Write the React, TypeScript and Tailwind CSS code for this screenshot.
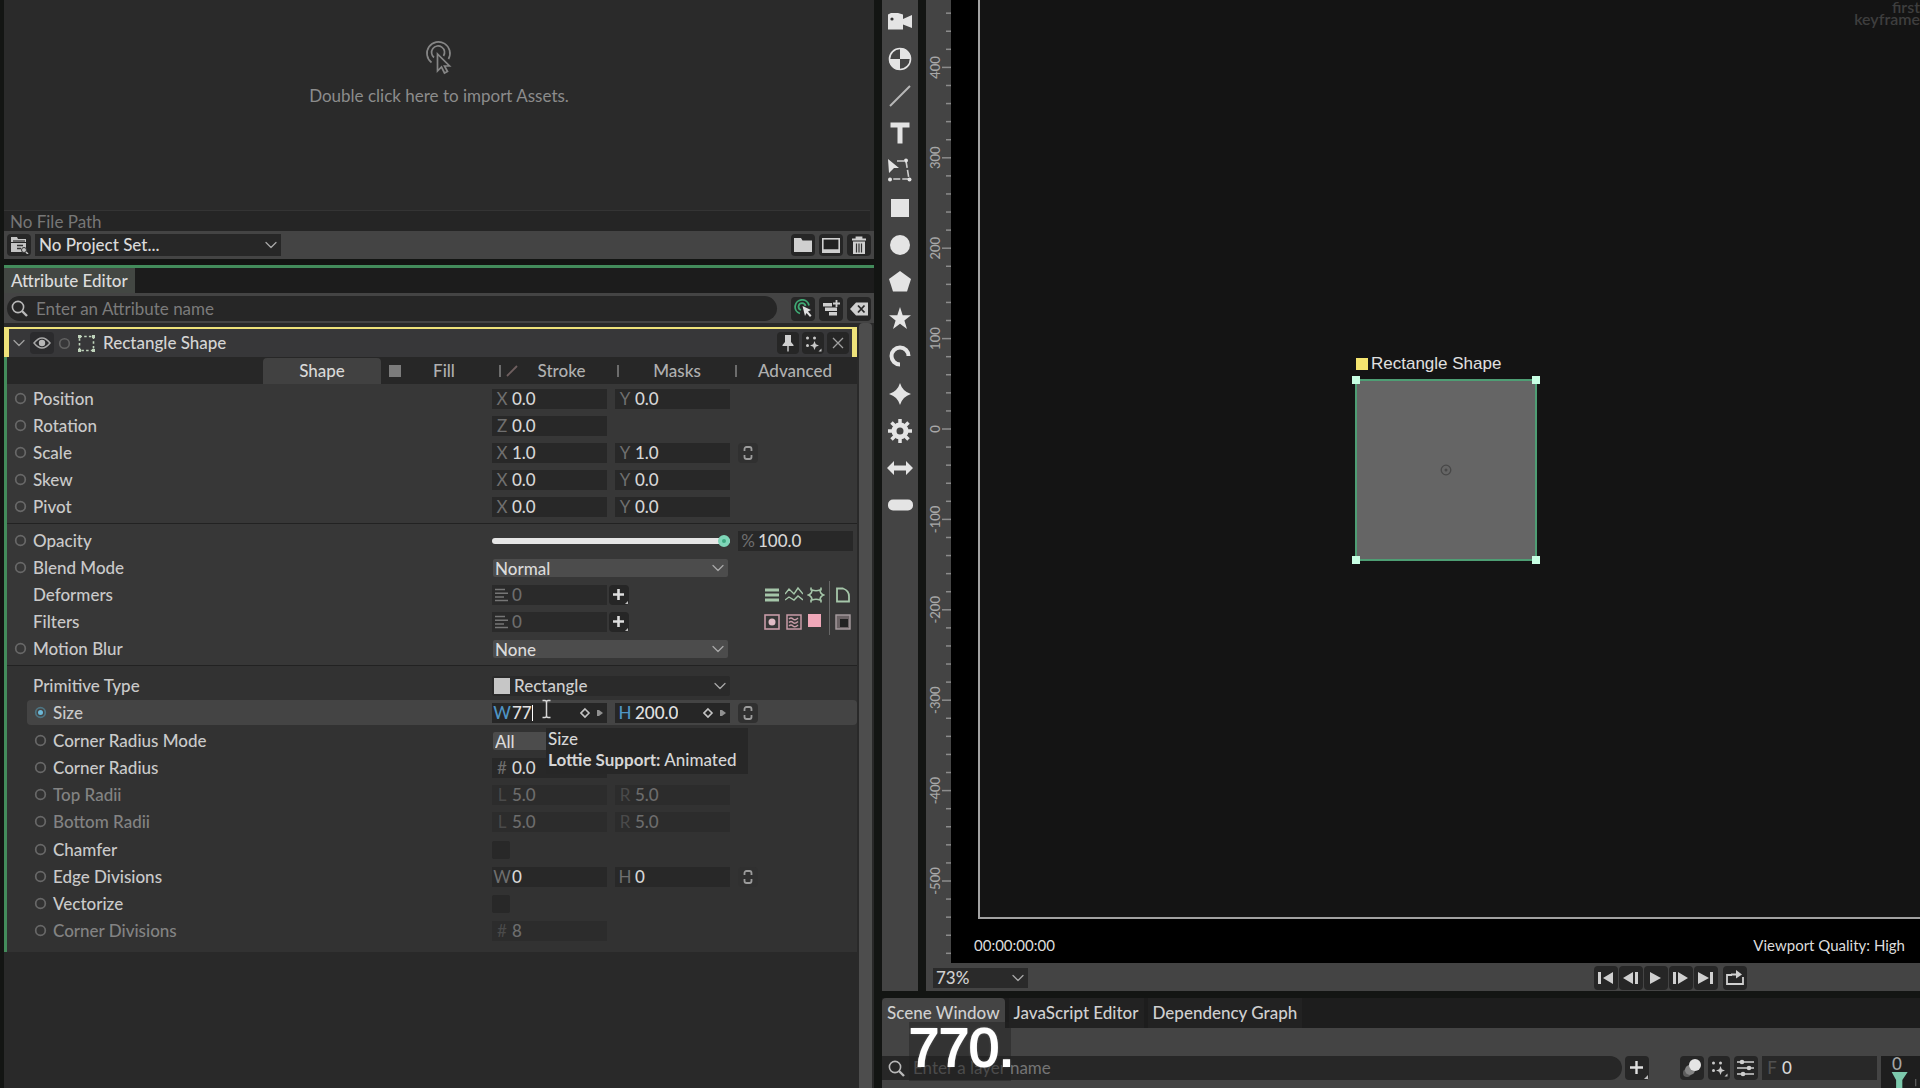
import { useState, type ReactNode } from "react";
import { ChevronDown } from "lucide-react";

const RULER_STEP = 90.4;
const RULER_ZERO = 429;

function IconButton({
  label,
  className = "",
  children,
}: {
  label: string;
  className?: string;
  children: ReactNode;
}) {
  return (
    <button
      aria-label={label}
      className={`flex items-center justify-center rounded-sm bg-[#262626] text-[#cfcfcf] ${className}`}
    >
      {children}
    </button>
  );
}

function SearchIcon() {
  return (
    <svg width="17" height="17" viewBox="0 0 17 17" className="shrink-0">
      <circle cx="7" cy="7" r="5.6" fill="none" stroke="#b9b9b9" strokeWidth="1.6" />
      <path d="M11 11l5 5" stroke="#b9b9b9" strokeWidth="2.4" />
    </svg>
  );
}

function SparkDots() {
  return (
    <svg width="17" height="17" viewBox="0 0 17 17" fill="#c9c9c9">
      <circle cx="2.5" cy="3" r="1.5" />
      <circle cx="9.5" cy="3" r="1.5" />
      <circle cx="2.5" cy="10.5" r="1.5" />
      <path d="M9.500 6l1.300 3.200 3.200 1.300-3.200 1.300L9.500 15l-1.300-3.200L5 10.500l3.200-1.300z" />
      <path d="M16.500 13.500v3h-3z" />
    </svg>
  );
}

function LinkIcon() {
  return (
    <button
      aria-label="Link values"
      className="flex h-5 w-5 items-center justify-center rounded-sm bg-[#303030]"
    >
      <svg width="10" height="16" viewBox="0 0 10 16" fill="none" stroke="#9c9c9c" strokeWidth="1.8">
        <path d="M1.500 6V4a2 2 0 0 1 2-2h3a2 2 0 0 1 2 2v2M1.500 10v2a2 2 0 0 0 2 2h3a2 2 0 0 0 2-2v-2" />
      </svg>
    </button>
  );
}

function NumberField({
  id,
  prefix,
  value,
  disabled = false,
}: {
  id: string;
  prefix: string;
  value: string;
  disabled?: boolean;
}) {
  const [text, setText] = useState(value);
  return (
    <div
      className={`flex h-5 w-[115px] items-center ${disabled ? "bg-[#2c2c2c] text-[#6d6d6d]" : "bg-[#282828] text-[#d6d6d6]"}`}
    >
      <label
        htmlFor={id}
        className={`w-5 shrink-0 text-center font-normal ${disabled ? "text-[#4a4a4a]" : "text-[#6f6f6f]"}`}
      >
        {prefix}
      </label>
      <input
        id={id}
        value={text}
        disabled={disabled}
        onChange={(e) => setText(e.target.value)}
        className="w-full min-w-0 bg-transparent outline-none"
      />
    </div>
  );
}

function KeyedField({
  id,
  prefix,
  value,
  editing = false,
}: {
  id: string;
  prefix: string;
  value: string;
  editing?: boolean;
}) {
  const [text, setText] = useState(value);
  return (
    <div className="flex h-5 w-[115px] items-center bg-[#262626] text-[#e2e2e2]">
      <label htmlFor={id} className="w-5 shrink-0 text-center text-[#4f94c4]">
        {prefix}
      </label>
      <input
        id={id}
        value={text}
        onChange={(e) => setText(e.target.value)}
        className="field-sizing-content bg-transparent outline-none"
      />
      {editing && <span className="h-4 w-px bg-white" />}
      <svg width="24" height="12" viewBox="0 0 24 12" className="mr-[3px] ml-auto shrink-0">
        <path d="M5 2l4 4-4 4-4-4z" fill="none" stroke="#c4c4c4" strokeWidth="1.600" />
        <path d="M17 3h2l4 3-4 3h-2z" fill="#909090" />
      </svg>
    </div>
  );
}

function SelectField({
  id,
  value,
  className,
  children,
}: {
  id: string;
  value: string;
  className: string;
  children?: ReactNode;
}) {
  return (
    <div className={`flex items-center rounded-xs ${className}`}>
      {children}
      <select id={id} className="h-full w-full appearance-none bg-transparent pl-[2px] outline-none">
        <option>{value}</option>
      </select>
      <ChevronDown size={20} className="-ml-5 shrink-0 text-[#a8a8a8]" strokeWidth={1.5} />
    </div>
  );
}

function Row({
  id,
  label,
  dot = true,
  sub = false,
  dim = false,
  active = false,
  children,
}: {
  id: string;
  label: string;
  dot?: boolean;
  sub?: boolean;
  dim?: boolean;
  active?: boolean;
  children: ReactNode;
}) {
  return (
    <div className={`flex h-[27px] items-center py-px ${sub ? "pl-5" : ""}`}>
      <div className={`flex h-full grow items-center rounded-sm ${active ? "bg-[#444444]" : ""}`}>
        <div className="flex w-[26px] justify-center">
          {dot && (
            <svg width="13" height="13" viewBox="0 0 13 13">
              <circle
                cx="6.5"
                cy="6.5"
                r="4.800"
                fill="none"
                stroke={active ? "#4d7482" : "#686868"}
                strokeWidth="1.700"
              />
              {active && <circle cx="6.500" cy="6.500" r="2.500" fill="#6db9d8" />}
            </svg>
          )}
        </div>
        <label htmlFor={id} className={`grow ${dim ? "text-[#838383]" : "text-[#cacaca]"}`}>
          {label}
        </label>
        <div className="flex w-[365px] items-center gap-2">{children}</div>
      </div>
    </div>
  );
}

function StackField({ id }: { id: string }) {
  return (
    <>
      <div className="flex h-5 w-[115px] items-center bg-[#2a2a2a] text-[#6d6d6d]">
        <svg width="20" height="14" viewBox="0 0 20 14" stroke="#767676" strokeWidth="1.500" className="shrink-0">
          <path d="M3 1.500h10M3 5.200h13M3 8.900h9M3 12.500h13" />
        </svg>
        <input id={id} readOnly value="0" className="w-full min-w-0 bg-transparent outline-none" />
      </div>
      <IconButton label="Add" className="-ml-[6px] h-5 w-5">
        <svg width="20" height="20" viewBox="0 0 20 20">
          <path d="M9.500 4v11M4 9.500h11" stroke="#dedede" strokeWidth="2.600" />
          <path d="M19 16v3h-3z" fill="#bdbdbd" />
        </svg>
      </IconButton>
    </>
  );
}

function DeformerIcons() {
  return (
    <div className="mr-[5px] ml-auto flex h-[27px] items-center gap-1 text-[#a5c6a9]">
      <button aria-label="Bars">
        <svg width="18" height="18" viewBox="0 0 18 18" stroke="currentColor" strokeWidth="3">
          <path d="M2 4h14M2 9h14M2 14h14" />
        </svg>
      </button>
      <button aria-label="Wave">
        <svg width="18" height="18" viewBox="0 0 18 18" fill="none" stroke="currentColor" strokeWidth="1.400">
          <path d="M0 8l4-5 5 5 4-6 5 6M0 14l4-3 5 3 4-4 5 4" />
        </svg>
      </button>
      <button aria-label="Bulge">
        <svg width="18" height="18" viewBox="0 0 18 18" fill="none" stroke="currentColor" strokeWidth="1.600">
          <path d="M5 4q4 1.500 8 0q0 3.500 3.500 5q-3.500 1.500-3.500 5q-4-1.500-8 0q0-3.500-3.500-5q3.500-1.500 3.500-5z" />
          <path d="M4 1.500v3M14 1.500v3M4 13.500v3M14 13.500v3" />
        </svg>
      </button>
      <span className="h-full w-px bg-[#666666]" />
      <button aria-label="Path">
        <svg width="18" height="18" viewBox="0 0 18 18" fill="none" stroke="currentColor" strokeWidth="1.800">
          <path d="M3 2.500h6q6 2 6 8v5H3z" />
        </svg>
      </button>
    </div>
  );
}

function FilterIcons() {
  return (
    <div className="mr-[5px] ml-auto flex h-[27px] items-center gap-1 text-[#c79ba7]">
      <button aria-label="Glow">
        <svg width="18" height="18" viewBox="0 0 18 18">
          <rect x="2" y="2" width="14" height="14" fill="none" stroke="currentColor" strokeWidth="1.600" />
          <circle cx="9" cy="9" r="3.500" fill="#e0bcc5" />
        </svg>
      </button>
      <button aria-label="Distort">
        <svg width="18" height="18" viewBox="0 0 18 18" fill="none" stroke="currentColor" strokeWidth="1.500">
          <rect x="2" y="2" width="14" height="14" />
          <path d="M4 6q2-2 4 0t5-1M4 9.500q2-2 4 0t5-1M4 13q2-2 4 0t5-1" />
        </svg>
      </button>
      <button aria-label="Colour">
        <svg width="18" height="18" viewBox="0 0 18 18">
          <rect x="1" y="1" width="13" height="13" fill="#f0a8b9" />
        </svg>
      </button>
      <span className="h-full w-px bg-[#666666]" />
      <button aria-label="Matte">
        <svg width="18" height="18" viewBox="0 0 18 18">
          <rect x="2" y="2" width="14" height="14" fill="#6a6264" stroke="#a89da0" strokeWidth="1.400" />
          <rect x="6" y="6" width="8" height="8" fill="#222222" />
        </svg>
      </button>
    </div>
  );
}

function CheckField({ id }: { id: string }) {
  return <input id={id} type="checkbox" className="h-[18px] w-[18px] appearance-none rounded-xs bg-[#282828]" />;
}

function AssetsPanel() {
  return (
    <section className="bg-[#2a2a2a]">
      <div className="flex h-[210px] flex-col items-center pt-10 text-[#8c8c8c]">
        <svg width="32" height="36" viewBox="0 0 32 36" fill="none" stroke="#868686" strokeWidth="1.700">
          <path d="M8.500 22.500A11.500 11.500 0 1 1 25.500 19M11 17.500A6.500 6.500 0 1 1 20.500 16" />
          <path d="M14.500 14v17l4-4 3 6 3-1.500-3-5.500h5z" fill="#2a2a2a" />
        </svg>
        <p className="mt-1 leading-8 font-normal">Double click here to import Assets.</p>
      </div>
      <div className="mr-1 h-[21px] border-t border-[#343434] bg-[#252525] pl-[6px] leading-[22px] font-normal text-[#777777]">
        No File Path
      </div>
      <div className="flex h-7 items-center gap-1 bg-[#444444] pr-[3px] pl-[3px]">
        <IconButton label="Open project" className="h-[22px] w-6">
          <svg width="20" height="18" viewBox="0 0 20 18">
            <path d="M2 1h6l1 2h8v3H2z M2 7h15v9H2z" fill="#c4c4c4" />
            <path d="M4 5h12" stroke="#333333" strokeWidth="1.200" />
            <path d="M8 9.500h6M8 12.500h4" stroke="#333333" strokeWidth="1.500" />
            <circle cx="15" cy="14" r="2.500" fill="#c4c4c4" stroke="#333333" />
            <path d="M17 16l2 2" stroke="#c4c4c4" strokeWidth="1.500" />
          </svg>
        </IconButton>
        <div className="flex h-[22px] w-[246px] items-center bg-[#272727]">
          <select aria-label="Project" className="w-full appearance-none bg-transparent pl-1 text-[#dadada] outline-none">
            <option>No Project Set...</option>
          </select>
          <ChevronDown size={20} strokeWidth={1.5} className="-ml-5 shrink-0 text-[#a8a8a8]" />
        </div>
        <div className="ml-auto flex gap-1">
          <IconButton label="New folder" className="h-[22px] w-6">
            <svg width="20" height="16" viewBox="0 0 20 16" fill="#d0d0d0">
              <path d="M1 1h7l1.500 2.500H19V15H1z" />
            </svg>
          </IconButton>
          <IconButton label="New composition" className="h-[22px] w-6">
            <svg width="20" height="17" viewBox="0 0 20 17">
              <rect x="1.800" y="1.800" width="16.400" height="13.400" fill="#222222" stroke="#cfcfcf" strokeWidth="1.600" />
              <path d="M1 14h18" stroke="#cfcfcf" strokeWidth="3.500" />
            </svg>
          </IconButton>
          <IconButton label="Delete" className="h-[22px] w-6">
            <svg width="16" height="19" viewBox="0 0 16 19">
              <path d="M1 3.500h14M5.500 3V1.500h5V3" fill="none" stroke="#cfcfcf" strokeWidth="1.800" />
              <path d="M2 5.500h12V18H2z" fill="#cfcfcf" />
              <path d="M5.500 7.500v9M8 7.500v9M10.500 7.500v9" stroke="#333333" strokeWidth="1.200" />
            </svg>
          </IconButton>
        </div>
      </div>
    </section>
  );
}

const shapeTabs = ["Shape", "Fill", "Stroke", "Masks", "Advanced"];

function AttributeEditor() {
  const [tab, setTab] = useState("Shape");

  return (
    <section className="mt-[6px] flex grow flex-col border-t-3 border-[#438c5b] bg-[#1c1c1c]">
      <div className="flex h-[25px] shrink-0">
        <button className="h-full bg-[#434743] px-[7px] text-[#dcdcdc]">Attribute Editor</button>
      </div>
      <div className="flex h-[30px] shrink-0 items-center bg-[#444444] pt-px pr-[3px] pl-[3px]">
        <div className="flex h-[25px] grow items-center gap-2 rounded-full bg-[#262626] pl-1">
          <SearchIcon />
          <input
            aria-label="Search attributes"
            placeholder="Enter an Attribute name"
            className="w-full bg-transparent font-normal outline-none placeholder:text-[#7b7b7b]"
          />
        </div>
        <div className="ml-[14px] flex gap-1">
          <IconButton label="Follow selection" className="h-6 w-6">
            <svg width="19" height="19" viewBox="0 0 19 19" fill="none" stroke="#3fa873" strokeWidth="1.800">
              <path d="M6 14.500A7 7 0 1 1 15 6.500M7 11A3.500 3.500 0 1 1 11.500 7" />
              <path d="M8.500 7l8.500 4-3 1.500 3.500 4-1.500 1.500-3.500-4-1.500 3z" fill="#e0e0e0" stroke="none" />
            </svg>
          </IconButton>
          <IconButton label="Add to panel" className="h-6 w-6">
            <svg width="19" height="17" viewBox="0 0 19 17" fill="#cfcfcf">
              <path d="M1 3h9v3.500H1zM3 7.500h12V11H3zM7 12h8v3.500H7z" />
              <path d="M14.500 0v7M11 3.500h7" stroke="#cfcfcf" strokeWidth="1.800" />
            </svg>
          </IconButton>
          <IconButton label="Clear" className="h-6 w-6">
            <svg width="20" height="16" viewBox="0 0 20 16">
              <path d="M1 8l6-6.500h12v13H7z" fill="#cfcfcf" />
              <path d="M9 4.500l6.500 7M15.500 4.500l-6.500 7" stroke="#2a2a2a" strokeWidth="1.800" />
            </svg>
          </IconButton>
        </div>
      </div>

      <div className="flex grow bg-[#292929] pt-1">
        <div className="mr-[2px] grow">
          <header className="flex h-[30px] items-center border-x-5 border-t-2 border-[#eee27a] bg-[#373739] pr-[3px]">
            <ChevronDown size={20} strokeWidth={1.5} className="text-[#a0a0a0]" />
            <button aria-label="Toggle visibility" className="ml-px flex h-[22px] w-6 items-center justify-center rounded-sm bg-[#2b2b2d]">
              <svg width="18" height="12" viewBox="0 0 18 12">
                <path d="M1 6q8-10 16 0q-8 10-16 0z" fill="none" stroke="#a8a8a8" strokeWidth="1.500" />
                <circle cx="9" cy="6" r="3.200" fill="#b8b8b8" />
              </svg>
            </button>
            <svg width="13" height="13" viewBox="0 0 13 13" className="ml-1">
              <circle cx="6.500" cy="6.500" r="4.800" fill="none" stroke="#626262" strokeWidth="1.600" />
            </svg>
            <svg width="17" height="17" viewBox="0 0 17 17" className="ml-[7px]">
              <rect x="1.500" y="1.500" width="14" height="14" fill="none" stroke="#bfd3bb" strokeWidth="1.600" strokeDasharray="2.500 2.200" />
              <path d="M0 0h3v3H0zM14 0h3v3h-3zM0 14h3v3H0zM14 14h3v3h-3z" fill="#bfd3bb" />
            </svg>
            <h2 className="ml-2 text-[#d4d4d4]">Rectangle Shape</h2>
            <div className="ml-auto flex gap-[3px]">
              <IconButton label="Pin" className="h-[22px] w-[22px]">
                <svg width="12" height="17" viewBox="0 0 12 17" fill="#cfcfcf">
                  <path d="M3 0h6v7l2.500 3v1h-11v-1L3 7zM5.300 11h1.400v5.500H5.300z" />
                </svg>
              </IconButton>
              <IconButton label="Presets" className="h-[22px] w-[22px]">
                <SparkDots />
              </IconButton>
              <IconButton label="Close" className="h-[22px] w-[22px]">
                <svg width="12" height="12" viewBox="0 0 12 12" stroke="#a0a0a0" strokeWidth="1.300">
                  <path d="M1 1l10 10M11 1L1 11" />
                </svg>
              </IconButton>
            </div>
          </header>

          <div className="border-l-3 border-[#438c5b]">
            <nav className="flex h-[27px] justify-end bg-[#272727] pt-px pr-1">
              {shapeTabs.map((name) => (
                <button
                  key={name}
                  onClick={() => setTab(name)}
                  className={`flex w-[118px] items-center ${tab === name ? "rounded-t-sm bg-[#414141] text-[#d8d8d8]" : "text-[#b0b0b0]"}`}
                >
                  {name === "Fill" && <span className="ml-2 h-3 w-3 bg-[#7c7c7c]" />}
                  {name !== "Shape" && name !== "Fill" && <span className="h-3 w-[2px] bg-[#6c6c6c]" />}
                  {name === "Stroke" && (
                    <svg width="12" height="12" viewBox="0 0 12 12" className="ml-[5px]">
                      <path d="M1 11L11 1" stroke="#6f5f5f" strokeWidth="1.800" />
                    </svg>
                  )}
                  <span
                    className={`grow text-center ${name === "Fill" || name === "Stroke" ? "pr-3" : ""}`}
                  >
                    {name}
                  </span>
                </button>
              ))}
            </nav>

            <div className="border-b border-[#222222] bg-[#373737] pt-px pb-[3px]">
              <Row id="position" label="Position">
                <NumberField id="position" prefix="X" value="0.0" />
                <NumberField id="position-y" prefix="Y" value="0.0" />
              </Row>
              <Row id="rotation" label="Rotation">
                <NumberField id="rotation" prefix="Z" value="0.0" />
              </Row>
              <Row id="scale" label="Scale">
                <NumberField id="scale" prefix="X" value="1.0" />
                <NumberField id="scale-y" prefix="Y" value="1.0" />
                <LinkIcon />
              </Row>
              <Row id="skew" label="Skew">
                <NumberField id="skew" prefix="X" value="0.0" />
                <NumberField id="skew-y" prefix="Y" value="0.0" />
              </Row>
              <Row id="pivot" label="Pivot">
                <NumberField id="pivot" prefix="X" value="0.0" />
                <NumberField id="pivot-y" prefix="Y" value="0.0" />
              </Row>
            </div>

            <div className="border-b border-[#222222] bg-[#373737] pt-[3px] pb-[3px]">
              <Row id="opacity" label="Opacity">
                <input
                  id="opacity"
                  type="range"
                  defaultValue={100}
                  className="h-[6px] w-[238px] appearance-none rounded-full bg-[#e6e6e6] [&::-webkit-slider-thumb]:h-3 [&::-webkit-slider-thumb]:w-3 [&::-webkit-slider-thumb]:appearance-none [&::-webkit-slider-thumb]:rounded-full [&::-webkit-slider-thumb]:border-4 [&::-webkit-slider-thumb]:border-[#7fd6b8] [&::-webkit-slider-thumb]:bg-[#3fa982]"
                />
                <NumberField id="opacity-value" prefix="%" value="100.0" />
              </Row>
              <Row id="blend" label="Blend Mode">
                <SelectField id="blend" value="Normal" className="ml-px h-[18px] w-[235px] bg-[#4c4c4c] text-[#dadada]" />
              </Row>
              <Row id="deformers" label="Deformers" dot={false}>
                <StackField id="deformers" />
                <DeformerIcons />
              </Row>
              <Row id="filters" label="Filters" dot={false}>
                <StackField id="filters" />
                <FilterIcons />
              </Row>
              <Row id="motion-blur" label="Motion Blur">
                <SelectField id="motion-blur" value="None" className="ml-px h-[18px] w-[235px] bg-[#4c4c4c] text-[#dadada]" />
              </Row>
            </div>

            <div className="flex flex-col gap-px bg-[#323232] pt-[6px] pb-2">
              <div>
                <Row id="primitive" label="Primitive Type" dot={false}>
                  <SelectField id="primitive" value="Rectangle" className="h-5 w-[238px] bg-[#2a2a2a] text-[#d0d0d0]">
                    <span className="mr-[2px] ml-[2px] h-4 w-4 shrink-0 bg-[#c6c6c6]" />
                  </SelectField>
                </Row>
                <div className="relative">
                  <Row id="size" label="Size" sub active>
                    <KeyedField id="size" prefix="W" value="77" editing />
                    <KeyedField id="size-h" prefix="H" value="200.0" />
                    <LinkIcon />
                  </Row>
                  <svg width="11" height="20" viewBox="0 0 11 20" className="absolute top-0 right-[305px]">
                    <path
                      d="M1.500 1.500h2.500q1.500 0 1.500 2v13q0 2-1.500 2H1.500M9.500 1.500H7q-1.500 0-1.500 2v13q0 2 1.500 2h2.500"
                      fill="none"
                      stroke="#d8d8d8"
                      strokeWidth="1.500"
                    />
                  </svg>
                  <div
                    role="tooltip"
                    className="absolute top-[29px] right-[109px] w-[202px] bg-[#272727] px-[2px] pb-1 leading-[21px] text-[#d6d6d6]"
                  >
                    <p>Size</p>
                    <p>
                      <b>Lottie Support:</b> Animated
                    </p>
                  </div>
                </div>
              </div>
              <div>
                <Row id="radius-mode" label="Corner Radius Mode" sub>
                  <SelectField id="radius-mode" value="All" className="ml-px h-[18px] w-[235px] bg-[#4c4c4c] text-[#dadada]" />
                </Row>
                <Row id="radius" label="Corner Radius" sub>
                  <NumberField id="radius" prefix="#" value="0.0" />
                </Row>
                <Row id="top-radii" label="Top Radii" sub dim>
                  <NumberField id="top-radii" prefix="L" value="5.0" disabled />
                  <NumberField id="top-radii-r" prefix="R" value="5.0" disabled />
                </Row>
                <Row id="bottom-radii" label="Bottom Radii" sub dim>
                  <NumberField id="bottom-radii" prefix="L" value="5.0" disabled />
                  <NumberField id="bottom-radii-r" prefix="R" value="5.0" disabled />
                </Row>
              </div>
              <div>
                <Row id="chamfer" label="Chamfer" sub>
                  <CheckField id="chamfer" />
                </Row>
                <Row id="edge" label="Edge Divisions" sub>
                  <NumberField id="edge" prefix="W" value="0" />
                  <NumberField id="edge-h" prefix="H" value="0" />
                  <LinkIcon />
                </Row>
                <Row id="vectorize" label="Vectorize" sub>
                  <CheckField id="vectorize" />
                </Row>
                <Row id="corner-div" label="Corner Divisions" sub dim>
                  <NumberField id="corner-div" prefix="#" value="8" disabled />
                </Row>
              </div>
            </div>
          </div>
        </div>
        <div className="mr-[2px] -mt-1 w-[13px] rounded-t-sm bg-[#4d4d4d]" />
      </div>
    </section>
  );
}

function Tool({ label, children }: { label: string; children: ReactNode }) {
  return (
    <button aria-label={label} className="flex h-[37px] items-center justify-center">
      <svg width="28" height="28" viewBox="-14 -14 28 28" fill="#e4e4e4">
        {children}
      </svg>
    </button>
  );
}

function Toolbar() {
  return (
    <aside className="flex w-9 shrink-0 flex-col gap-px overflow-hidden bg-[#444444] pt-[3px]">
      <div className="flex flex-col">
        <Tool label="Camera">
          <path d="M-12-7.500l3-1.500h7L3-7.500V-3L12-7V6L3 2.500V7.500h-15z" />
          <circle cx="-8" cy="-3" r="1.600" fill="#333333" />
        </Tool>
        <Tool label="Null">
          <circle r="10.500" fill="#444444" stroke="#e4e4e4" strokeWidth="1.600" />
          <path d="M0 0V-11A11 11 0 0 1 11 0zM0 0V11A11 11 0 0 1-11 0z" />
        </Tool>
        <Tool label="Line">
          <path d="M-10 10L10-10" stroke="#b8b8b8" strokeWidth="2" />
        </Tool>
        <Tool label="Text">
          <path d="M-9.500-10.500h19v5H2.500v16h-5v-16h-7z" />
        </Tool>
        <Tool label="Edit path">
          <path d="M-3-9H6L9 9H-9" fill="none" stroke="#cfcfcf" strokeWidth="1.600" strokeDasharray="7 2" />
          <path d="M-12-11L-1-2h-5l-5 5z" />
          <circle cx="6" cy="-9.500" r="2" />
          <circle cx="9.500" cy="9.500" r="2" />
          <circle cx="-10" cy="9.500" r="2" />
        </Tool>
      </div>
      <div className="flex flex-col">
        <Tool label="Rectangle">
          <rect x="-9" y="-9" width="18" height="18" />
        </Tool>
        <Tool label="Ellipse">
          <circle r="10" />
        </Tool>
        <Tool label="Polygon">
          <path d="M0-11L11-3L7 9.500H-7L-11-3z" />
        </Tool>
        <Tool label="Star">
          <path d="M0-12L2.700-3.800H11L4.400 1.400 7 10 0 4.800-7 10-4.400 1.400-11-3.800h8.300z" />
        </Tool>
        <Tool label="Arc">
          <path d="M8.500 0A8.500 8.500 0 1 0 0 8.500" fill="none" stroke="#e4e4e4" strokeWidth="4" />
        </Tool>
      </div>
      <div className="flex flex-col">
        <Tool label="Super ellipse">
          <path d="M0-11Q2.500-2.500 11 0Q2.500 2.500 0 11Q-2.500 2.500-11 0Q-2.500-2.500 0-11z" />
        </Tool>
        <Tool label="Cogwheel">
          <circle r="6" fill="none" stroke="#e4e4e4" strokeWidth="5" />
          <path
            d="M0-12V-8M0 12V8M-12 0H-8M12 0H8M-8.500-8.500l3 3M8.500 8.500l-3-3M-8.500 8.500l3-3M8.500-8.500l-3 3"
            stroke="#e4e4e4"
            strokeWidth="3.500"
          />
        </Tool>
        <Tool label="Arrow">
          <path d="M-13 0L-6-7v4.500H6V-7L13 0 6 7V2.500H-6V7z" />
        </Tool>
        <Tool label="Capsule">
          <rect x="-12" y="-5.500" width="25" height="11" rx="5" />
        </Tool>
      </div>
    </aside>
  );
}

function Ruler() {
  const ticks = Array.from({ length: 53 }, (_, i) => i - 23);
  return (
    <svg width="25" height="963" viewBox="0 0 25 963" className="shrink-0">
      {ticks.map((t) => {
        const y = RULER_ZERO + (t * RULER_STEP) / 5;
        const major = t % 5 === 0;
        return (
          <g key={t}>
            <path d={`M${major ? 16 : 20} ${y}H25`} stroke="#8c8c8c" strokeWidth="1.500" />
            {major && y > 20 && y < 940 && (
              <text
                transform={`translate(14 ${y}) rotate(-90)`}
                textAnchor="middle"
                fontSize="13"
                fill="#a8a8a8"
              >
                {t === 0 ? 0 : -t * 20}
              </text>
            )}
          </g>
        );
      })}
    </svg>
  );
}

function Viewport() {
  return (
    <section className="flex min-w-0 grow flex-col bg-[#444444]">
      <div className="flex min-h-0 grow overflow-hidden">
        <Ruler />
        <div className="relative flex min-w-0 grow flex-col bg-black pl-[27px]">
          <div className="relative grow border-b-2 border-l-2 border-[#a2a2a2] bg-[#141414]">
            <p className="absolute top-px right-0 text-right text-base leading-3 font-semibold text-[#3e3e3e]">
              first
              <br />
              keyframe
            </p>
            {/* selected shape on the canvas */}
            <div className="absolute top-[379px] left-[375px] h-[182px] w-[182px] border-2 border-[#4e9e74] bg-[#656565]">
              <div className="absolute -top-[27px] -left-px flex items-center gap-[3px] font-['Liberation_Sans',sans-serif] text-[17px] whitespace-nowrap text-[#e0e0e0]">
                <span className="h-3 w-3 bg-[#f5e570]" />
                Rectangle Shape
              </div>
              <span className="absolute -top-[5px] -left-[5px] h-2 w-2 bg-[#c8ffe4]" />
              <span className="absolute -top-[5px] -right-[5px] h-2 w-2 bg-[#c8ffe4]" />
              <span className="absolute -bottom-[5px] -left-[5px] h-2 w-2 bg-[#c8ffe4]" />
              <span className="absolute -right-[5px] -bottom-[5px] h-2 w-2 bg-[#c8ffe4]" />
              <svg width="12" height="12" viewBox="0 0 12 12" className="absolute top-[83px] left-[83px]">
                <circle cx="6" cy="6" r="4.800" fill="none" stroke="#484848" strokeWidth="1.300" />
                <circle cx="6" cy="6" r="1.500" fill="#484848" />
              </svg>
            </div>
          </div>
          <div className="flex h-11 items-center justify-between pt-2 pr-[15px] text-[15px] text-[#dcdcdc]">
            <span className="-ml-1 font-normal">00:00:00:00</span>
            <span className="font-normal">Viewport Quality: High</span>
          </div>
        </div>
      </div>
      <div className="flex h-7 shrink-0 items-center pt-px pl-[7px]">
        <div className="flex h-5 w-[95px] items-center bg-[#2a2a2a]">
          <select aria-label="Zoom" className="w-full appearance-none bg-transparent pl-[3px] text-[#cfcfcf] outline-none">
            <option>73%</option>
          </select>
          <ChevronDown size={20} strokeWidth={1.5} className="-ml-5 shrink-0 text-[#a8a8a8]" />
        </div>
        <div className="mr-[173px] ml-auto flex gap-px">
          <IconButton label="First frame" className="h-6 w-6">
            <svg width="18" height="14" viewBox="0 0 18 14" fill="#d0d0d0">
              <path d="M1 1h3v12H1zM16 1v12L6 7z" />
            </svg>
          </IconButton>
          <IconButton label="Previous frame" className="h-6 w-6">
            <svg width="18" height="14" viewBox="0 0 18 14" fill="#d0d0d0">
              <path d="M13 1h3v12h-3zM11 1v12L1 7z" />
            </svg>
          </IconButton>
          <IconButton label="Play" className="h-6 w-6">
            <svg width="12" height="14" viewBox="0 0 12 14" fill="#d0d0d0">
              <path d="M0 1v12l11-6z" />
            </svg>
          </IconButton>
          <IconButton label="Next frame" className="h-6 w-6">
            <svg width="18" height="14" viewBox="0 0 18 14" fill="#d0d0d0">
              <path d="M1 1h3v12H1zM6 1v12l10-6z" />
            </svg>
          </IconButton>
          <IconButton label="Last frame" className="h-6 w-6">
            <svg width="18" height="14" viewBox="0 0 18 14" fill="#d0d0d0">
              <path d="M13 1h3v12h-3zM1 1v12l11-6z" />
            </svg>
          </IconButton>
          <IconButton label="Loop" className="ml-1 h-6 w-6">
            <svg width="20" height="16" viewBox="0 0 20 16">
              <path d="M7 5H2v9h16V7M6 4.500h6" fill="none" stroke="#d0d0d0" strokeWidth="1.800" />
              <path d="M11 0l6 4.500-6 4z" fill="#d0d0d0" />
            </svg>
          </IconButton>
        </div>
      </div>
    </section>
  );
}

const sceneTabs = ["Scene Window", "JavaScript Editor", "Dependency Graph"];

function ScenePanel() {
  const [tab, setTab] = useState("Scene Window");

  return (
    <section className="relative mt-[7px] h-[90px] shrink-0 bg-[#444444]">
      <nav className="flex h-[30px] gap-1 bg-[#1d1d1d] text-[#d0d0d0]">
        {sceneTabs.map((name) => (
          <button
            key={name}
            onClick={() => setTab(name)}
            className={`h-full px-[5px] whitespace-nowrap ${tab === name ? "rounded-t-sm bg-[#444444]" : "bg-[#222222]"}`}
          >
            {name}
          </button>
        ))}
      </nav>
      <div className="flex h-[60px] pt-7">
        <div className="flex h-6 grow items-center gap-2 rounded-r-full bg-[#272727] pl-[6px]">
          <SearchIcon />
          <input
            aria-label="Search layers"
            placeholder="Enter a layer name"
            className="w-full bg-transparent font-normal outline-none placeholder:text-[#757575]"
          />
        </div>
        <IconButton label="Add layer" className="ml-[3px] h-6 w-6">
          <svg width="22" height="22" viewBox="0 0 22 22">
            <path d="M10.500 4v13M4 10.500h13" stroke="#e0e0e0" strokeWidth="2.400" />
            <path d="M22 18v4h-4z" fill="#bdbdbd" />
          </svg>
        </IconButton>
        <div className="ml-[31px] flex gap-1">
          <IconButton label="Motion blur" className="h-6 w-6">
            <svg width="22" height="22" viewBox="0 0 22 22">
              <circle cx="6" cy="16" r="4" fill="#5c5c5c" />
              <circle cx="9" cy="13" r="5" fill="#858585" />
              <circle cx="14" cy="8" r="6" fill="#e4e4e4" />
            </svg>
          </IconButton>
          <IconButton label="Presets" className="h-6 w-[22px]">
            <SparkDots />
          </IconButton>
          <IconButton label="Filters" className="h-6 w-6">
            <svg width="20" height="20" viewBox="0 0 20 20" fill="#cfcfcf" stroke="#cfcfcf" strokeWidth="1.400">
              <path d="M1 4h17M1 10h17M1 16h17" />
              <circle cx="6" cy="4" r="1.600" />
              <circle cx="13" cy="10" r="1.600" />
              <circle cx="7" cy="16" r="1.600" />
            </svg>
          </IconButton>
        </div>
        <div className="ml-1 flex h-6 w-[115px] items-center bg-[#282828] text-[#d6d6d6]">
          <label htmlFor="frame" className="w-5 shrink-0 text-center text-[#505050]">
            F
          </label>
          <input id="frame" defaultValue="0" className="w-full min-w-0 bg-transparent outline-none" />
        </div>
        <div className="ml-1 flex w-[39px] flex-col bg-[#1e1e1e] pl-[9px] text-[#a5a5a5]">
          <span className="ml-[2px] h-4 leading-4">0</span>
          <svg width="30" height="18" viewBox="0 0 30 18">
            <path d="M0 0h18l-6 9v9H5V9z" fill="#7cc9ac" />
            <path d="M27 8v8" stroke="#5a5a5a" strokeWidth="1.500" />
          </svg>
        </div>
      </div>
      {/* pressed keys */}
      <div className="absolute top-6 left-[27px] h-[59px] w-[102px] bg-[#222222]/50 font-['Liberation_Sans',sans-serif] text-[54px] leading-[50px] font-normal text-white [-webkit-text-stroke:2px_white] [text-shadow:0_0_3px_#999999]">
        770.
      </div>
    </section>
  );
}

export default function App() {
  return (
    <main className="grid h-screen grid-cols-[882fr_1038fr] overflow-hidden bg-[#131513] font-['Lato',sans-serif] text-[17px] leading-5 font-medium">
      <div className="flex min-w-0 flex-col pr-2 pl-1">
        <AssetsPanel />
        <AttributeEditor />
      </div>
      <div className="flex min-h-0 min-w-0 flex-col">
        <div className="flex min-h-0 grow gap-2">
          <Toolbar />
          <Viewport />
        </div>
        <ScenePanel />
      </div>
    </main>
  );
}
